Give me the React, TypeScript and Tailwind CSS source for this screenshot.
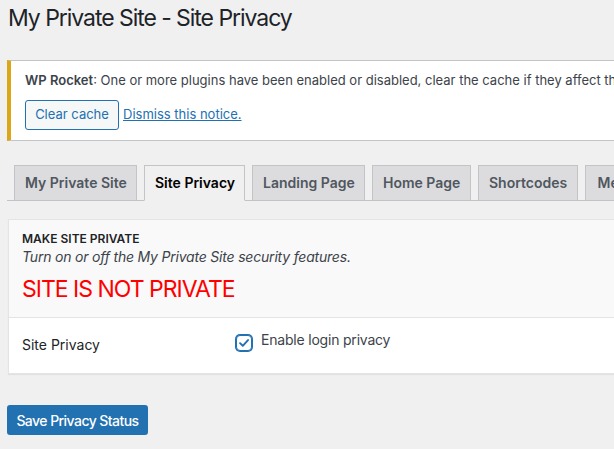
import React from "react";

const tabs = [
  { label: "My Private Site", w: "w-[123px]", active: false },
  { label: "Site Privacy", w: "w-[101px]", active: true },
  { label: "Landing Page", w: "w-[113px]", active: false },
  { label: "Home Page", w: "w-[99px]", active: false },
  { label: "Shortcodes", w: "w-[100px]", active: false },
  { label: "Membership", w: "w-[110px]", active: false },
];

export default function App() {
  return (
    <div className="w-[614px] h-[449px] overflow-hidden bg-[#f0f0f1] font-['Inter','Liberation_Sans',sans-serif] text-[#3c434a]">
      <div className="w-[800px] pl-[7px]">
        <h1 className="pt-[3px] pl-px text-[23px] leading-[30px] font-normal tracking-[-1.05px] text-[#1d2327]">
          My Private Site - Site Privacy
        </h1>

        <div className="mt-[27px] bg-white border border-[#c3c4c7] border-l-4 border-l-[#dba617] pl-[14px] pt-[9px] pb-[10px]">
          <p className="text-[13px] leading-[20px] text-[#3c434a] whitespace-nowrap">
            <span className="font-semibold">WP Rocket</span>: One or more plugins have been enabled or disabled, clear the cache if they affect the front end of your site.
          </p>
          <div className="mt-[10px] flex items-center">
            <button className="h-[30px] w-[94px] rounded-[3px] border border-[#2271b1] bg-[#f6f7f7] text-[13px] text-[#2271b1]">
              Clear cache
            </button>
            <a className="ml-[4px] text-[13px] text-[#2271b1] underline">Dismiss this notice.</a>
          </div>
        </div>

        <div className="mt-[24px] flex items-end gap-[7px] pl-[7px] border-b border-[#c3c4c7] h-[36px]">
          {tabs.map((t) => (
            <div
              key={t.label}
              className={
                t.active
                  ? `${t.w} shrink-0 h-[36px] -mb-px border border-[#c3c4c7] border-b-[#f0f0f1] bg-[#f0f0f1] text-black text-[14px] font-semibold leading-[24px] px-[10px] py-[5px] text-center whitespace-nowrap`
                  : `${t.w} shrink-0 h-[36px] -mb-px border border-[#c3c4c7] bg-[#dcdcde] text-[#50575e] text-[14px] font-semibold leading-[24px] px-[10px] py-[5px] text-center whitespace-nowrap`
              }
            >
              {t.label}
            </div>
          ))}
        </div>

        <div className="mt-[18px] ml-px border border-[#e4e4e7] shadow-[0_1px_1px_rgba(0,0,0,0.06)] bg-white">
          <div className="bg-[#f9f9f9] pl-[13px] pt-[10px] pb-[13px] border-b border-[#e4e4e7]">
            <h3 className="text-[12px] leading-[17px] font-semibold text-[#1d2327]">MAKE SITE PRIVATE</h3>
            <p className="text-[14px] leading-[20px] italic tracking-[-0.2px] text-[#3c434a]">
              Turn on or off the My Private Site security features.
            </p>
            <p className="mt-[7px] text-[23px] leading-[30px] tracking-[-1px] text-[#ff0000]">SITE IS NOT PRIVATE</p>
          </div>
          <div className="flex items-start h-[55px] pl-[13px]">
            <div className="w-[213px] mt-[17px] text-[14px] leading-[20px] text-[#1d2327]">Site Privacy</div>
            <div className="flex items-start">
              <span className="mt-[17px] ml-px w-4 h-4 rounded-[4px] border border-[#2271b1] shadow-[0_0_0_1px_#2271b1] bg-white flex items-center justify-center">
                <svg width="14" height="14" viewBox="0 0 16 16" fill="none">
                  <path d="M3.5 8.2 L6.6 11.2 L12.6 4.6" stroke="#2271b1" strokeWidth="2.2" strokeLinecap="round" strokeLinejoin="round" />
                </svg>
              </span>
              <span className="ml-[9px] mt-[12px] text-[14px] leading-[20px] tracking-[-0.2px] text-[#3c434a]">Enable login privacy</span>
            </div>
          </div>
        </div>

        <button className="mt-[31px] h-[30px] w-[141px] rounded-[3px] bg-[#2271b1] text-white text-[14px] font-medium tracking-[-0.55px]">
          Save Privacy Status
        </button>
      </div>
    </div>
  );
}
